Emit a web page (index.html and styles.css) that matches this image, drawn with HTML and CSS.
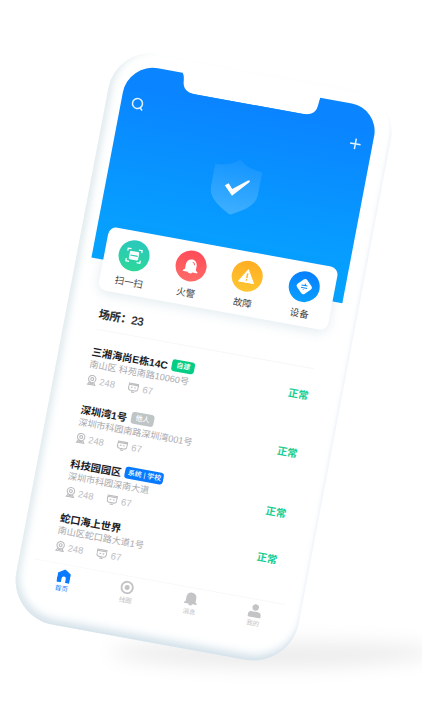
FILE: index.html
```html
<!DOCTYPE html>
<html lang="zh-CN">
<head>
<meta charset="utf-8">
<title>场所</title>
<link rel="stylesheet" href="styles.css">
</head>
<body>
<svg class="defs" aria-hidden="true">
  <defs>
    <linearGradient id="shield" x1="0" y1="0" x2="0" y2="1"><stop offset="0" stop-color="#fff" stop-opacity=".05"/><stop offset="1" stop-color="#fff" stop-opacity=".22"/></linearGradient>
    <symbol id="camera" viewBox="0 0 12 12"><g fill="none" stroke="currentColor" stroke-width="1.200"><circle cx="6" cy="4.700" r="4"/><circle cx="6" cy="4.700" r="1.600"/><path d="M3.800 8l-1.800 3h8L8.200 8M4 9.600h4"/></g></symbol>
    <symbol id="device" viewBox="0 0 12 12"><g fill="none" stroke="currentColor" stroke-width="1.200"><path d="M.8 1.600h10.400v4.600c0 2-1 3-2.600 3H3.400C1.800 9.200.8 8.200.8 6.200zM.8 3h10.400M3.300 5.800h1.800M6.900 5.800h1.800M4.200 10.900h3.600"/></g></symbol>
  </defs>
</svg>
<div class="stage">
  <div class="ground"></div>
  <div class="phone">
    <main class="screen">
      <header class="hero">
        <svg class="notch" viewBox="0 0 140 20"><path d="M0 0V1C2 3 2.500 7 2.800 10C3.500 16 8 20 16 20H125C134 20 138.500 16 139 10L140 1V0z" fill="#fff"/></svg>
        <div class="actions">
          <svg class="act" viewBox="0 0 14 14"><circle cx="6.500" cy="6.300" r="5" /><path d="M9.800 10l2.400 2.300"/></svg>
          <svg class="act" viewBox="0 0 14 14"><path d="M7 1.700v10.600M1.700 7h10.600"/></svg>
        </div>
        <svg class="shield" viewBox="0 0 48 56"><path d="M24 0C18 6 9 8.500 0 8.500V31C0 42 10 49 24 56C38 49 48 42 48 31V8.500C39 8.500 30 6 24 0z" fill="url(#shield)"/><path d="M13.500 28L17 25.400L21.500 30.500L35.500 19.300Q38.500 18 36.800 21L22.500 37z" fill="#fff"/></svg>
      </header>
      <section class="card">
        <div class="item"><span class="dot green"><svg viewBox="0 0 18 18"><g fill="none" stroke="#fff" stroke-width="1.300"><path d="M1.500 5V2.200H5M13 2.200h3.500V5M1.500 13v2.800H5M13 15.800h3.500V13"/></g><rect x="4" y="4.500" width="10" height="9" rx="1.500" fill="#fff"/><path d="M5 9h8" stroke="#2bcdaf" stroke-width="1.200"/></svg></span><span>扫一扫</span></div>
        <div class="item"><span class="dot red"><svg viewBox="0 0 18 18"><path d="M3.200 13V8.200C3.200 4.300 5.700 2 9 2s5.800 2.300 5.800 6.200V13l2 1.300v1.200H11.500a2.600 1.800 0 0 1-5 0H1.200v-1.200z" fill="#fff"/><path d="M9.900 4.600c1.500.3 2.400 1.300 2.600 2.900" fill="none" stroke="#ff5c61" stroke-width="1"/></svg></span><span>火警</span></div>
        <div class="item"><span class="dot amber"><svg viewBox="0 0 18 18"><path d="M9 2L17 15.500H1z" fill="#fff" stroke="#fff" stroke-linejoin="round"/><path d="M9 6v5M9 12.200v1.600" stroke="#ffb827" stroke-width="1.600"/></svg></span><span>故障</span></div>
        <div class="item"><span class="dot blue"><svg viewBox="0 0 18 18"><rect x="2.500" y="2.500" width="13" height="13" rx="2.800" transform="rotate(45 9 9)" fill="#fff"/><path d="M5.800 7.700H12.200M5.800 10.300h6.400M9.700 5.700v2M8.300 10.300v2" stroke="#0b8dff" stroke-width="1.100"/></svg></span><span>设备</span></div>
      </section>
      <h1 class="count">场所：23</h1>
      <ul class="list">
        <li class="place first">
          <div><h2>三湘海尚E栋14C<span class="tag own">自建</span></h2><p>南山区 科苑南路10060号</p>
          <div class="nums"><svg><use href="#camera"/></svg><span>248</span><svg><use href="#device"/></svg><span>67</span></div></div>
          <b class="state">正常</b>
        </li>
        <li class="place">
          <div><h2>深圳湾1号<span class="tag other">他人</span></h2><p>深圳市科园南路深圳湾001号</p>
          <div class="nums"><svg><use href="#camera"/></svg><span>248</span><svg><use href="#device"/></svg><span>67</span></div></div>
          <b class="state">正常</b>
        </li>
        <li class="place">
          <div><h2>科技园园区<span class="tag system">系统 | 学校</span></h2><p>深圳市科园深南大道</p>
          <div class="nums"><svg><use href="#camera"/></svg><span>248</span><svg><use href="#device"/></svg><span>67</span></div></div>
          <b class="state low">正常</b>
        </li>
        <li class="place">
          <div><h2>蛇口海上世界</h2><p>南山区蛇口路大道1号</p>
          <div class="nums"><svg><use href="#camera"/></svg><span>248</span><svg><use href="#device"/></svg><span>67</span></div></div>
          <b class="state high">正常</b>
        </li>
      </ul>
      <nav class="tabs">
        <div class="tab on"><svg viewBox="0 0 14 14"><path d="M7 0L14 4.500V14H9.200V9.800a2.200 2.200 0 0 0-4.400 0V14H0V4.500z" fill="currentColor"/></svg><span>首页</span></div>
        <div class="tab"><svg viewBox="0 0 14 14"><circle cx="7" cy="7" r="5.900" fill="none" stroke="currentColor" stroke-width="2"/><circle cx="7" cy="7" r="2.600" fill="currentColor"/></svg><span>线圈</span></div>
        <div class="tab"><svg viewBox="0 0 14 14"><path d="M1.800 10V5.500C1.800 2.200 4 .2 7 .2s5.200 2 5.200 5.300V10l1.600 1v1H9a2 1.700 0 0 1-4 0H.2v-1z" fill="currentColor"/></svg><span>消息</span></div>
        <div class="tab"><svg viewBox="0 0 14 14"><circle cx="7" cy="3.500" r="3.400" fill="currentColor"/><path d="M.3 14v-2.500Q.3 8 3.800 8h6.400q3.500 0 3.500 3.500V14z" fill="currentColor"/></svg><span>我的</span></div>
      </nav>
    </main>
  </div>
</div>
</body>
</html>
```
FILE: styles.css
```css
* { box-sizing: border-box; }
body {
  margin: 0;
  background: #fff;
  font-family: "Liberation Sans", "Noto Sans CJK SC", sans-serif;
}
h1, h2, p, ul { margin: 0; padding: 0; list-style: none; }
svg { display: block; flex: none; }
.defs { position: absolute; width: 0; height: 0; }

.stage {
  position: relative;
  width: 422px;
  height: 712px;
  overflow: hidden;
}
.ground {
  position: absolute;
  left: 110px;
  top: 638px;
  width: 325px;
  height: 28px;
  border-radius: 50%;
  background: linear-gradient(rgba(0, 0, 0, .03), rgba(0, 0, 0, .1));
  filter: blur(9px);
}

/* The handset lies tilted; its origin is the top left corner of the body. */
.phone {
  position: relative;
  width: 287px;
  height: 580px;
  padding: 14px 17px 26px 15px;
  border-radius: 42px 42px 46px 46px;
  background: #fff;
  transform-origin: 0 0;
  transform: matrix(.984, .179, -.187, .983, 116.300, 46.500);
  box-shadow: inset 7px -2px 10px -4px #dde8ec, inset 0 -9px 11px -5px #c9dae5, inset -2px -2px 4px -2px #f0f3fa;
}
.screen {
  display: flex;
  flex-direction: column;
  width: 255px;
  height: 540px;
}

.hero {
  display: flex;
  flex-direction: column;
  align-items: center;
  flex: none;
  width: 255px;
  height: 198px;
  border-radius: 30px 28px 0 0;
  background: linear-gradient(#0a84ff 10%, #06a3ff 92%);
}
.notch { width: 140px; height: 20px; margin: -1px 5px 0 0; }
.actions {
  display: flex;
  justify-content: space-between;
  width: 100%;
  padding: 13px 10px 0 10px;
}
.act { width: 14px; height: 14px; fill: none; stroke: #e4f3ff; stroke-width: 1.500; }
.shield { width: 48px; height: 56px; margin-top: 29px; }

.card {
  position: relative;
  display: grid;
  grid-template-columns: repeat(4, 1fr);
  flex: none;
  width: 233px;
  height: 64px;
  margin: -34px 0 0 11.500px;
  padding: 9px 1px 0;
  border-radius: 8px;
  background: #fff;
  box-shadow: 0 3px 12px rgba(60, 120, 150, .14);
}
.item {
  display: flex;
  flex-direction: column;
  align-items: center;
  gap: 5px;
  font-size: 9.500px;
  line-height: 14px;
  color: #444;
}
.dot {
  display: grid;
  place-items: center;
  width: 31px;
  height: 31px;
  border-radius: 50%;
}
.dot svg { width: 17px; height: 17px; }
.green { background: linear-gradient(#2ac8bd, #2cd79a); }
.red { background: linear-gradient(#ff4b58, #ff6b68); }
.amber { background: linear-gradient(#ffad22, #ffc631); }
.blue { background: linear-gradient(#077fff, #089fff); }

.count {
  flex: none;
  height: 40px;
  margin: 0 16px 0 18px;
  padding-top: 14px;
  border-bottom: 1px solid #f6f6f7;
  font-size: 11px;
  line-height: 20px;
  font-weight: 500;
  color: #222;
  -webkit-text-stroke: .35px;
}

.list { flex: none; height: 236px; padding: 14px 15px 0 18px; }
.place { display: flex; justify-content: space-between; height: 55px; }
.first { height: 59px; }
.place h2 {
  display: flex;
  align-items: center;
  height: 14px;
  font-size: 10.300px;
  font-weight: 700;
  white-space: nowrap;
  color: #1c1c1e;
}
.tag {
  height: 12px;
  margin-left: 4px;
  padding: 0 4.500px;
  border-radius: 3px;
  font-size: 7px;
  line-height: 12px;
  font-weight: 500;
  color: #fff;
}
.own { background: #06cd85; }
.other { background: #bfc4c7; }
.system { background: #077aff; padding: 0 2.500px; }
.place p {
  height: 15px;
  font-size: 9.150px;
  line-height: 15px;
  white-space: nowrap;
  color: #a8a8ad;
}
.nums {
  display: flex;
  align-items: center;
  height: 15px;
  font-size: 9.500px;
  color: #bcbcbf;
}
.nums svg { width: 11px; height: 11px; }
.nums span { margin-left: 2px; }
.nums span + svg { margin-left: 13px; }
.nums span:last-child { margin-left: 4px; }
.state {
  padding-top: 7px;
  font-size: 10.300px;
  line-height: 14px;
  color: #16ce92;
}
.state { margin-right: 1px; }
.low { padding-top: 13px; }
.high { padding-top: 5px; }

.tabs {
  display: grid;
  grid-template-columns: repeat(4, 64.800px);
  flex: none;
  height: 36px;
  padding-top: 4px;
  border-top: 1px solid #f8f8f9;
}
.tab {
  display: flex;
  flex-direction: column;
  align-items: center;
  gap: 1px;
  font-size: 6.500px;
  line-height: 9px;
  color: #c4c4c6;
}
.tab svg { width: 13.500px; height: 14px; }
.on { color: #077aff; }
```
